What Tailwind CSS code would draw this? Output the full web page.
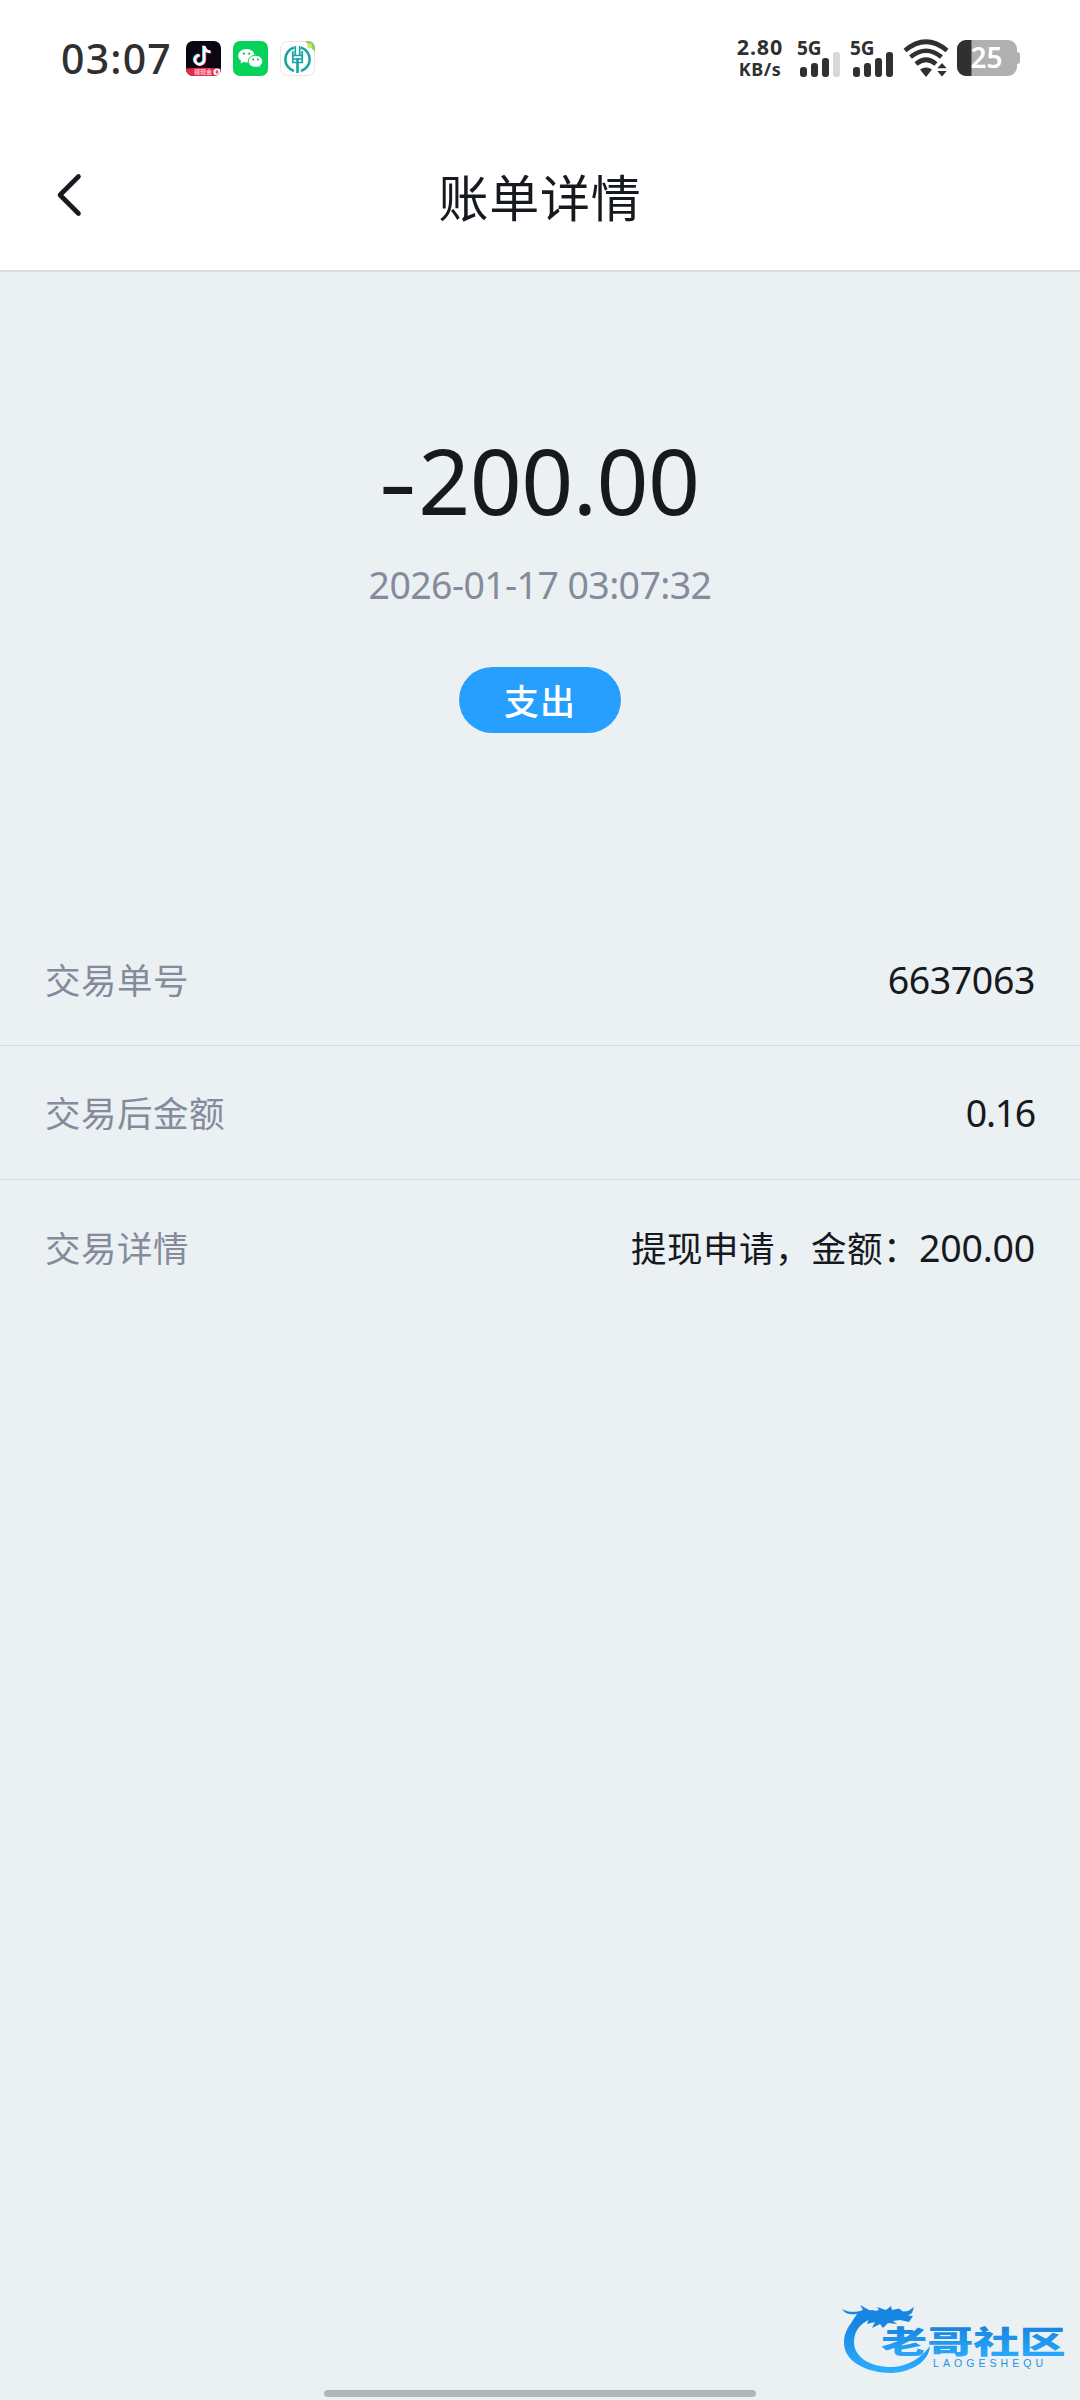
<!DOCTYPE html>
<html lang="zh-CN">
<head>
  <meta charset="UTF-8">
  <meta name="viewport" content="width=device-width, initial-scale=1.0">
  <title>账单详情</title>
  <script src="https://cdn.jsdelivr.net/npm/@tailwindcss/browser@4"></script>
</head>
<body class="w-[1080px] h-[2400px] overflow-hidden flex flex-col bg-[#ebf0f3] font-['Noto_Sans','Noto_Sans_CJK_SC',sans-serif] text-[#16191e]">

  <!-- Status bar -->
  <div class="h-[116px] bg-white flex justify-between items-center px-[60px] text-[#303030] shrink-0">
    <div class="flex items-center">
      <span class="w-[126px] pl-px text-[41px] leading-[56px] font-medium tracking-[1.2px] whitespace-nowrap">03:07</span>
      <!-- Douyin -->
      <svg class="w-[35px] h-[35px]" viewBox="0 0 35 35">
        <clipPath id="round"><rect width="35" height="35" rx="7"/></clipPath>
        <g clip-path="url(#round)">
          <rect width="35" height="35" fill="#0c0512"/>
          <g fill="none" stroke-width="2.600">
            <path d="M17.300 4.500v13.600a4.600 4.600 0 1 1-4.600-4.400M17.300 5c.6 3.300 2.900 5.200 6.200 5.400" stroke="#25e5e8"/>
            <path d="M19 5.500v13.600a4.600 4.600 0 1 1-4.600-4.400M19 6c.6 3.300 2.900 5.200 6.200 5.400" stroke="#f0325a"/>
            <path d="M18.200 5v13.600a4.600 4.600 0 1 1-4.600-4.400M18.200 5.500c.6 3.300 2.900 5.200 6.200 5.400" stroke="#fff"/>
          </g>
          <path d="M0 27.500Q17 26 35 27.500V35H0z" fill="#e52b4c"/>
          <circle cx="31" cy="31" r="3.600" fill="#fff"/>
          <path d="M31 29v4M29.500 31h3" stroke="#e52b4c" stroke-width="1.200"/>
          <text x="8" y="33.200" font-size="6" font-weight="700" fill="#ffc9cf">领现金</text>
        </g>
      </svg>
      <!-- WeChat -->
      <svg class="w-[35px] h-[35px] ml-[12px]" viewBox="0 0 35 35">
        <rect width="35" height="35" rx="7" fill="#06d25b"/>
        <path d="M13.500 8C8.800 8 5.200 11 5.200 14.800c0 2.200 1.200 4 3 5.200l-.7 2.500 2.900-1.400c1 .3 2 .4 3.100.4 4.600 0 8.200-3 8.200-6.700S18.100 8 13.500 8z" fill="#fff"/>
        <path d="M22.500 14.300c-4.100 0-7.200 2.600-7.200 6s3.100 6 7.200 6c.9 0 1.800-.1 2.600-.4l2.500 1.300-.6-2.200c1.600-1.100 2.700-2.800 2.700-4.700 0-3.400-3.200-6-7.200-6z" fill="#fff" stroke="#06d25b" stroke-width="1"/>
        <g fill="#07b850"><circle cx="10.800" cy="12.700" r="1.100"/><circle cx="16.300" cy="12.700" r="1.100"/><circle cx="20.200" cy="18.600" r="1"/><circle cx="24.900" cy="18.600" r="1"/></g>
      </svg>
      <!-- Bank app -->
      <svg class="w-[35px] h-[35px] ml-[12px]" viewBox="0 0 35 35">
        <rect x=".5" y=".5" width="34" height="34" rx="7" fill="#fff" stroke="#e7e7e7"/>
        <path d="M25 0h3q7 0 7 8v3z" fill="#8bcf63"/>
        <circle cx="29.500" cy="5" r="2.400" fill="#d6e46a"/>
        <g fill="none" stroke="#18a5a2">
          <path d="M14 6.500a12.300 12.300 0 0 0 0 23.500M21 6.500a12.300 12.300 0 0 1 0 23.500" stroke-width="2.600"/>
          <path d="M17.500 17v15" stroke-width="2.600"/>
          <path d="M15.300 5v9M19.700 5v9M12.800 10v11.500h9.400V10M12.800 14.500h9.400M12.800 18h9.400" stroke-width="1.700"/>
        </g>
      </svg>
    </div>

    <div class="flex items-center">
      <div class="w-[50px] flex flex-col items-center font-bold whitespace-nowrap">
        <span class="text-[21.500px] leading-[22px] tracking-[0.9px]">2.80</span>
        <span class="text-[18px] leading-[22px] tracking-[0.5px]">KB/s</span>
      </div>
      <svg class="w-[46px] h-[40px] ml-[12px] overflow-visible" viewBox="0 0 46 40">
        <text x="0" y="16.500" font-size="19" font-weight="700" fill="#303030">5G</text>
        <g fill="#303030"><rect x="3" y="29" width="7" height="10" rx="3"/><rect x="14" y="25" width="7" height="14" rx="3"/><rect x="25" y="20" width="7" height="19" rx="3"/></g>
        <rect x="36" y="14" width="7" height="25" rx="3" fill="#d8d8d8"/>
      </svg>
      <svg class="w-[46px] h-[40px] ml-[7px] overflow-visible" viewBox="0 0 46 40">
        <text x="0" y="16.500" font-size="19" font-weight="700" fill="#303030">5G</text>
        <g fill="#303030"><rect x="3" y="29" width="7" height="10" rx="3"/><rect x="14" y="25" width="7" height="14" rx="3"/><rect x="25" y="20" width="7" height="19" rx="3"/><rect x="36" y="14" width="7" height="25" rx="3"/></g>
      </svg>
      <svg class="w-[46px] h-[40px] ml-[7px]" viewBox="0 0 46 40">
        <g fill="none" stroke="#303030" stroke-width="4.600">
          <path d="M2 12.500Q23-5 44 12.500"/>
          <path d="M7.500 19Q23 6.500 38.500 19"/>
          <path d="M13 26Q23 17.500 33 26"/>
        </g>
        <path d="M17 31.500Q23 27.500 29 31.500L23 39zM34.300 30.300 39 25l4.700 5.300zM34.300 33h9.400L39 38.500z" fill="#303030"/>
      </svg>
      <!-- Battery -->
      <svg class="w-[63px] h-[36px] ml-[8px]" viewBox="0 0 63 36">
        <clipPath id="cell"><rect width="60" height="36" rx="9"/></clipPath>
        <path d="M59 12h1q3 0 3 3v6q0 3-3 3h-1z" fill="#b0b0b0"/>
        <g clip-path="url(#cell)"><rect width="60" height="36" fill="#b0b0b0"/><rect width="14.500" height="36" fill="#303030"/></g>
        <text x="13.500" y="28" font-size="28" font-weight="600" fill="#fff">25</text>
      </svg>
    </div>
  </div>

  <!-- Title bar -->
  <header class="h-[156px] shrink-0 bg-white border-b-2 border-[#d9dcdc] grid grid-cols-[1fr_auto_1fr] items-center pt-[3px]">
    <svg class="w-[26px] h-[46px] ml-[56px]" viewBox="0 0 26 46">
      <path d="M22.500 4.500 4 23 22.500 41.500" fill="none" stroke="#16191e" stroke-width="4.600" stroke-linecap="round" stroke-linejoin="round"/>
    </svg>
    <h1 class="text-[50px] leading-[60px] tracking-[0.7px] font-['Noto_Sans_CJK_SC',sans-serif]">账单详情</h1>
  </header>

  <!-- Amount -->
  <section class="h-[642px] shrink-0 flex flex-col items-center pt-[152px]">
    <p class="pl-[2px] text-[91px] leading-[112px] tracking-[-0.6px] whitespace-nowrap"><span class="inline-block scale-x-130 mr-[7px]">-</span>200.00</p>
    <p class="mt-[23px] text-[37.500px] leading-[52px] tracking-[-0.6px] text-[#858b9b] whitespace-nowrap">2026-01-17 03:07:32</p>
    <span class="mt-[56px] w-[162px] h-[66px] rounded-full bg-[#279fff] text-white text-[35px] font-medium tracking-[1px] flex items-center justify-center font-['Noto_Sans_CJK_SC',sans-serif]">支出</span>
  </section>

  <!-- Details -->
  <dl class="text-[35.500px] leading-[52px]">
    <div class="h-[132px] px-[45px] flex items-center justify-between border-b border-[#d3d9dd]">
      <dt class="text-[#858b9b] tracking-[0.5px]">交易单号</dt>
      <dd class="text-[37.500px] tracking-[-0.4px]">6637063</dd>
    </div>
    <div class="h-[134px] pt-px px-[45px] flex items-center justify-between border-b border-[#d3d9dd]">
      <dt class="text-[#858b9b] tracking-[0.5px]">交易后金额</dt>
      <dd class="text-[37.500px] tracking-[-1.300px]">0.16</dd>
    </div>
    <div class="h-[134px] pt-px px-[45px] flex items-center justify-between">
      <dt class="text-[#858b9b] tracking-[0.5px]">交易详情</dt>
      <dd class="tracking-[0.5px]">提现申请，金额：<span class="text-[37.500px] tracking-[-0.2px]">200.00</span></dd>
    </div>
  </dl>

  <!-- Community logo and home indicator -->
  <footer class="mt-auto h-[110px] shrink-0 flex flex-col items-center">
    <svg class="self-end w-[240px] h-[90px]" viewBox="0 0 240 90">
      <defs>
        <linearGradient id="blue" x1="0" y1="0" x2="0" y2="1"><stop offset="0" stop-color="#147bd9"/><stop offset="1" stop-color="#2caeff"/></linearGradient>
      </defs>
      <path d="M34 20C16 24 4 37 4 53c0 18 22 30 47 30 22-1 38-12 39-27-8 11-22 21-39 21-21 0-37-10-37-25 0-12 8-21 22-25z" fill="url(#blue)"/>
      <path d="M2 19c5 3 11 3.500 17 2.200l4-1.200-3-5 9 5 6 1 4-1-2-3 9 3 5-4 1 4 7-1.500 4 3 5-.5 6-4-2 6-4 2.500 5 .5-4 6-9-2-7 1 4 3-9-1-5 5-3-4-8 4 3-6-8 2 2-6C20 28 15 30 11 33l6-9c-6 1-12 0-15-5z" fill="#1686e2"/>
      <g fill="url(#blue)" font-family="Noto Sans CJK SC, sans-serif" font-size="32.500" font-weight="900" transform="translate(41 63) scale(1.42 .94)">
        <text x="0" y="0">老哥社区</text>
      </g>
      <text x="93" y="77" font-family="Liberation Sans, sans-serif" font-size="10.500" fill="#2492e4" textLength="110">LAOGESHEQU</text>
    </svg>
    <div class="mt-[10px] w-[432px] h-[7px] rounded-full bg-[#b1b6b9]"></div>
  </footer>
</body>
</html>
